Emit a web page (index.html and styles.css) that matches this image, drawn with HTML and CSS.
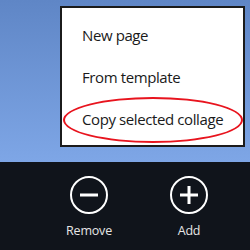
FILE: index.html
```html
<!DOCTYPE html>
<html lang="en">

<head>
  <meta charset="UTF-8">
  <meta name="viewport" content="width=device-width, initial-scale=1.0">
  <title>App bar flyout</title>
  <link rel="stylesheet" href="styles.css">
</head>

<body>
  <main class="canvas">
    <nav class="flyout">
      <a class="flyout-item">New page</a>
      <a class="flyout-item">From template</a>
      <a class="flyout-item">Copy selected collage</a>
    </nav>
    <div class="highlight"></div>
  </main>
  <footer class="appbar">
    <button class="cmd">
      <svg class="cmd-icon" viewBox="0 0 40 40" width="40" height="40">
        <circle cx="20" cy="20" r="18" fill="none" stroke="#fff" stroke-width="2" />
        <rect x="11" y="18.5" width="18" height="3" fill="#fff" />
      </svg>
      <span class="cmd-label">Remove</span>
    </button>
    <button class="cmd">
      <svg class="cmd-icon" viewBox="0 0 40 40" width="40" height="40">
        <circle cx="20" cy="20" r="18" fill="none" stroke="#fff" stroke-width="2" />
        <rect x="11" y="18.5" width="18" height="3" fill="#fff" />
        <rect x="18.5" y="11" width="3" height="18" fill="#fff" />
      </svg>
      <span class="cmd-label">Add</span>
    </button>
  </footer>
</body>

</html>
```

FILE: styles.css
```css
html {
  box-sizing: border-box;
  font-family: "Open Sans", "Noto Sans", sans-serif;
  font-size: 16px;
}

*,
*::before,
*::after {
  box-sizing: inherit;
}

body {
  margin: 0;
  width: 250px;
  height: 250px;
  display: flex;
  flex-direction: column;
  overflow: hidden;
}

.canvas {
  position: relative;
  height: 162px;
  background: linear-gradient(#5f86c6, #7ea6e6);
}

.flyout {
  position: absolute;
  left: 60px;
  top: 6px;
  width: 185px;
  display: flex;
  flex-direction: column;
  padding: 6px 0 5px 20px;
  background-color: #fff;
  border: 2px solid #1b1b1b;
}

.flyout-item {
  height: 42px;
  line-height: 42px;
  font-size: 15px;
  letter-spacing: -0.4px;
  color: #1a1a1a;
}

.highlight {
  position: absolute;
  left: 63px;
  top: 97px;
  width: 180px;
  height: 46px;
  border: 2px solid #e8141e;
  border-radius: 50%;
}

.appbar {
  flex-grow: 1;
  display: flex;
  padding: 13px 0 0 68px;
  gap: 58px;
  background-color: #10141b;
}

.cmd {
  display: flex;
  flex-direction: column;
  align-items: center;
  width: 42px;
  padding: 0;
  border: 0;
  background: none;
  font-family: inherit;
}

.cmd-icon {
  display: block;
}

.cmd-label {
  margin-top: 7px;
  font-size: 12.5px;
  letter-spacing: -0.2px;
  color: #e6e6e6;
}
```
